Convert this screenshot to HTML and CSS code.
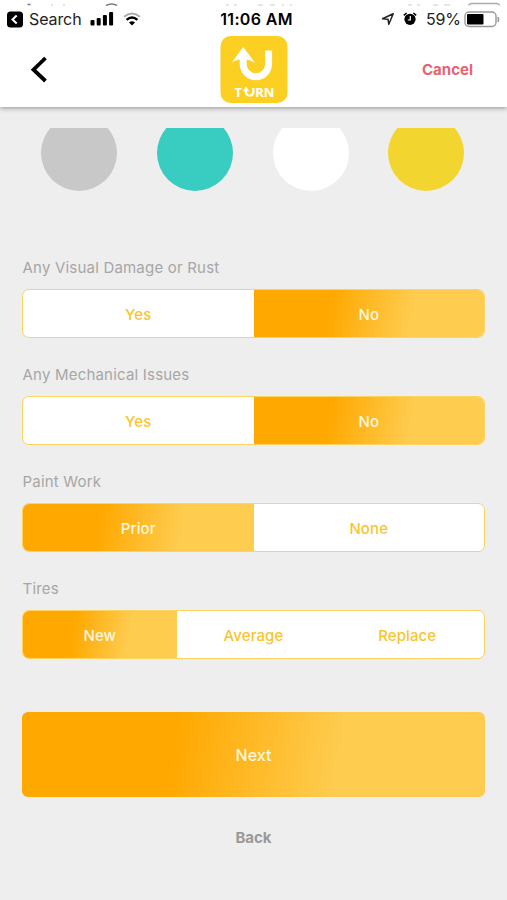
FILE: index.html
```html
<!DOCTYPE html>
<html lang="en">
<head>
<meta charset="utf-8">
<title>Turn</title>
<link rel="stylesheet" href="styles.css">
</head>
<body>
<header class="header">
  <svg class="slivers" width="507" height="6" viewBox="0 0 507 6" fill="none" stroke="#777" stroke-width="1.5" aria-hidden="true">
    <path d="M27.500 4.500h3M106 5.500q6-3 11 0"/>
    <path d="M469 5.500q0-2 3-2h25q2 0 2.500 2" stroke="#aaa"/>
    <path d="M51 5h2M63 5h2M408 5h4M417 5h3M433 5h5M444 5h6M226 5h3M234 5h3M258 5h5M270 5h5M282 5h2M290 5h2" stroke="#ccc" stroke-width="1"/>
  </svg>
  <div class="status">
    <div class="status-left">
      <svg width="16" height="17" viewBox="0 0 16 17"><rect y=".5" width="16" height="16" rx="3.500"/><path d="M9.700 4.500 5.500 8.500l4.200 4" fill="none" stroke="#fff" stroke-width="2"/></svg>
      <span class="search">Search</span>
      <svg class="signal" width="24" height="14" viewBox="0 0 24 14"><rect x=".5" y="8" width="4" height="5.500" rx="1"/><rect x="6.700" y="6" width="4" height="7.500" rx="1"/><rect x="12.900" y="3" width="4" height="10.500" rx="1"/><rect x="19.100" y="0" width="4" height="13.500" rx="1"/></svg>
      <svg class="wifi" width="18" height="14" viewBox="0 0 18 14" fill="none"><path d="M1 4.700q8-6.500 16 0" stroke="#aaa" stroke-width="2"/><path d="M3.500 7.800q5.500-4.600 11 0" stroke="#000" stroke-width="2.400"/><path d="M9 13.500 6 10.400q3-2.300 6 0z" fill="#000"/></svg>
    </div>
    <span class="time">11:06 AM</span>
    <div class="status-right">
      <svg width="14" height="14" viewBox="0 0 14 14"><path d="M1.500 6.700 12.200 1.700 7.800 12.300 7 7.200z" fill="none" stroke="#222" stroke-width="1.500" stroke-linejoin="round"/></svg>
      <svg class="alarm" width="14" height="14" viewBox="0 0 14 14"><circle cx="7" cy="7.300" r="5.600"/><path d="M.8 3.400 3.600 1M13.200 3.400 10.400 1" stroke="#000" stroke-width="1.500"/><path d="M7.300 4v4H4.800" fill="none" stroke="#fff" stroke-width="1.200"/></svg>
      <span class="percent">59%</span>
      <svg class="battery" width="37" height="17" viewBox="0 0 37 17"><rect x="1" y="1" width="31" height="14.500" rx="4" fill="#fff" stroke="#999" stroke-width="1.400"/><rect x="3" y="3" width="16.500" height="10.500" rx="1"/><path d="M34 6q2 2 0 5z" fill="#999" stroke="#999"/></svg>
    </div>
  </div>
  <nav class="nav">
    <svg class="chevron" width="18" height="28" viewBox="0 0 18 28" fill="none" stroke="#000" stroke-width="3.800"><path d="M15.500 2 3.500 13.700l12 11.300"/></svg>
    <svg class="logo" width="68" height="68" viewBox="0 0 68 68">
      <rect x=".5" y="0" width="67" height="67" rx="10" fill="#fbd022"/>
      <path d="M23.200 21V28a12.700 12.700 0 0 0 25.400 0V14.500" fill="none" stroke="#fff" stroke-width="7"/>
      <path d="M23.200 11 12 26.300q7-3.300 11-3.300 6 0 12 3.700z" fill="#fff"/>
      <g class="logo-text"><text x="14.500" y="60.700">T</text><text x="35.300" y="60.700" textLength="19">RN</text></g>
      <path d="M26 53.500V56a3.500 3.500 0 0 0 7.400 0V52" fill="none" stroke="#fff" stroke-width="2.200"/>
      <path d="M26 50.500l-3.200 4.700h6.500z" fill="#fff"/>
    </svg>
    <a class="cancel">Cancel</a>
  </nav>
</header>
<main class="content">
  <div class="colors">
    <span class="color gray"></span><span class="color teal"></span><span class="color white"></span><span class="color yellow"></span>
  </div>
  <section class="field">
    <div class="label">Any Visual Damage or Rust</div>
    <div class="segments"><span class="option">Yes</span><span class="option selected">No</span></div>
  </section>
  <section class="field">
    <div class="label">Any Mechanical Issues</div>
    <div class="segments"><span class="option">Yes</span><span class="option selected">No</span></div>
  </section>
  <section class="field">
    <div class="label">Paint Work</div>
    <div class="segments"><span class="option selected">Prior</span><span class="option">None</span></div>
  </section>
  <section class="field">
    <div class="label">Tires</div>
    <div class="segments"><span class="option selected">New</span><span class="option">Average</span><span class="option">Replace</span></div>
  </section>
  <div class="next">Next</div>
  <div class="back">Back</div>
</main>
</body>
</html>
```
FILE: styles.css
```css
* { box-sizing: border-box; }
body {
  margin: 0;
  height: 900px;
  overflow: hidden;
  background: #eee;
  font-family: Inter, "Liberation Sans", sans-serif;
  font-size: 15px;
}
svg { display: block; flex: none; }
.header {
  position: relative;
  height: 107px;
  background: #fff;
  box-shadow: 0 1px 5px rgba(0, 0, 0, .4);
}
.slivers { position: absolute; top: 0; left: 0; }
.status {
  display: grid;
  grid-template-columns: 1fr auto 1fr;
  align-items: center;
  height: 36px;
  padding: 2px 6px 0 7px;
  line-height: 20px;
}
.status-left, .status-right { display: flex; align-items: center; }
.status-right { justify-content: flex-end; }
.search { width: 53px; margin-left: 6px; font-size: 16px; color: #222; letter-spacing: -.1px; white-space: nowrap; }
.signal { margin-left: 8px; }
.wifi { margin-left: 9px; }
.time { padding-left: 5px; font-size: 16px; font-weight: 600; letter-spacing: .35px; }
.alarm { margin-left: 8px; }
.percent { margin-left: 9px; width: 34px; font-size: 16px; color: #222; white-space: nowrap; letter-spacing: -.2px; }
.battery { margin-left: 4px; }
.nav {
  display: grid;
  grid-template-columns: 1fr 68px 1fr;
  align-items: center;
  height: 67px;
  padding: 0 33px 0 30px;
}
.logo { margin-left: 2px; }
.logo-text { fill: #fff; font: 700 13px "Open Sans", sans-serif; }
.cancel { justify-self: end; padding: 0 1px 2px 0; font-size: 15px; font-weight: 700; color: #e8636e; }
.content { padding: 21px 22px 0; }
.colors {
  display: flex;
  justify-content: space-between;
  align-items: flex-end;
  height: 63px;
  padding: 0 20.5px 0 19px;
  overflow: hidden;
  margin-bottom: 67px;
}
.color { width: 76px; height: 76px; border-radius: 50%; flex: none; }
.gray { background: #c8c8c8; }
.teal { background: #39ccc0; }
.white { background: #fff; }
.yellow { background: #f3d530; }
.field { height: 107px; }
.label { height: 31px; padding-left: .5px; line-height: 19px; color: #a6a6a6; letter-spacing: .2px; }
.segments {
  display: flex;
  height: 49px;
  border: 1.5px solid #fbd35f;
  border-radius: 7px;
  overflow: hidden;
  background: #fff;
}
.option { flex: 1; display: flex; align-items: center; justify-content: center; padding-top: 1px; color: #fac42d; font-weight: 500; letter-spacing: .1px; }
.selected, .next { background: linear-gradient(100deg, #ffa800 33%, #fecc4f 68%); background-origin: border-box; color: #fff7df; }
.next {
  display: flex;
  align-items: center;
  justify-content: center;
  height: 85px;
  margin-top: 26px;
  border-radius: 6px;
  font-size: 16px;
  font-weight: 500;
}
.back { margin-top: 31px; line-height: 20px; text-align: center; font-size: 15px; font-weight: 700; color: #999; }
```
